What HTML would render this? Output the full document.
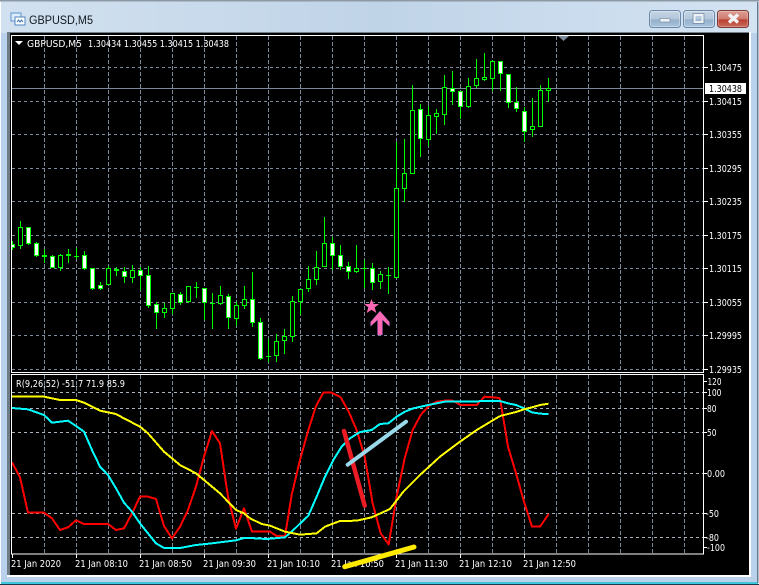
<!DOCTYPE html>
<html><head><meta charset="utf-8"><style>
html,body{margin:0;padding:0;background:#fff}
body{width:759px;height:585px;overflow:hidden;position:relative;font-family:"DejaVu Sans",sans-serif}
svg{position:absolute;left:0;top:0}
text{font-family:"DejaVu Sans",sans-serif;font-size:10px;fill:#fff}
</style></head><body>
<svg width="759" height="585" viewBox="0 0 759 585">
<defs>
<linearGradient id="t2" x1="0" y1="0" x2="1" y2="0"><stop offset="0" stop-color="#d2e1ef"/><stop offset=".5" stop-color="#c0d4e8"/><stop offset="1" stop-color="#d4e3f2"/></linearGradient>
<linearGradient id="btn" x1="0" y1="0" x2="0" y2="1"><stop offset="0" stop-color="#c6d5e4"/><stop offset=".5" stop-color="#b3c7db"/><stop offset=".55" stop-color="#95b0cb"/><stop offset="1" stop-color="#a9c6df"/></linearGradient>
<linearGradient id="cls" x1="0" y1="0" x2="0" y2="1"><stop offset="0" stop-color="#dda297"/><stop offset=".5" stop-color="#cf7a6e"/><stop offset=".55" stop-color="#b83f30"/><stop offset="1" stop-color="#cb6f60"/></linearGradient>
</defs>
<!-- window frame -->
<rect width="759" height="585" fill="#fff"/>
<rect x="1" y="1" width="757" height="583" fill="#b9d1ea"/>
<rect x="1" y="1" width="757" height="32" fill="url(#t2)"/>
<rect x="0" y="0" width="759" height="1.5" fill="#8d9aa6"/>
<rect x="0" y="584" width="759" height="1" fill="#1d3a4a"/>
<rect x="1" y="582" width="757" height="2" fill="#3fc6dc"/>
<rect x="757" y="2" width="1.5" height="581" fill="#5f7c93"/>
<!-- title -->
<g>
<rect x="11" y="13" width="10" height="8" fill="#dcecfb" stroke="#5b93cc"/>
<rect x="15" y="17" width="10" height="8" fill="#fff" stroke="#4f86bf"/>
<path d="M17 22l1.500-2 1.500 2 1.500-2 1.500 2" stroke="#3a6fa8" fill="none"/>
</g>
<text x="29" y="24" textLength="64" lengthAdjust="spacingAndGlyphs" style="font-family:'Liberation Sans',sans-serif;font-size:11.5px;fill:#101820">GBPUSD,M5</text>
<!-- buttons -->
<rect x="649.500" y="10.500" width="31" height="17" rx="3" fill="url(#btn)" stroke="#6a89a8"/>
<rect x="650.500" y="11.500" width="29" height="15" rx="2" fill="none" stroke="#fff" stroke-opacity=".35"/>
<rect x="660" y="18.500" width="10" height="3.500" fill="#eef2f6" stroke="#7a8ea4" stroke-width=".7"/>
<rect x="683.500" y="10.500" width="31" height="17" rx="3" fill="url(#btn)" stroke="#6a89a8"/>
<rect x="684.500" y="11.500" width="29" height="15" rx="2" fill="none" stroke="#fff" stroke-opacity=".35"/>
<rect x="694.500" y="15" width="8" height="7" fill="none" stroke="#eef2f6" stroke-width="2"/>
<rect x="693" y="13.500" width="11" height="10" fill="none" stroke="#6b7f95" stroke-width=".6"/>
<rect x="717.500" y="10.500" width="31" height="17" rx="3" fill="url(#cls)" stroke="#7c3a34"/>
<rect x="718.500" y="11.500" width="29" height="15" rx="2" fill="none" stroke="#fff" stroke-opacity=".25"/>
<path d="M729 14.500l9 8M738 14.500l-9 8" stroke="#f2f2f2" stroke-width="3.400"/>
<!-- client -->
<rect x="7" y="32" width="744" height="545" fill="#fff"/>
<rect x="7" y="32" width="742" height="543" fill="#6f7d89"/>
<rect x="10" y="33" width="739" height="542" fill="#000"/>
<!-- grid -->
<g stroke="#7b8a9a" stroke-width="1" fill="none" shape-rendering="crispEdges">
<path stroke-dasharray="4 2" d="M44.500 36V371M76.500 36V371M108.500 36V371M140.500 36V371M172.500 36V371M204.500 36V371M236.500 36V371M268.500 36V371M300.500 36V371M332.500 36V371M364.500 36V371M396.500 36V371M428.500 36V371M460.500 36V371M492.500 36V371M524.500 36V371M556.500 36V371M588.500 36V371M620.500 36V371M652.500 36V371M684.500 36V371"/>
<path stroke-dasharray="3 3" d="M12 67.500H703M12 101.500H703M12 134.500H703M12 168.500H703M12 201.500H703M12 235.500H703M12 268.500H703M12 302.500H703M12 335.500H703M12 369.500H703"/>
<path stroke-dasharray="4 2" d="M44.500 375V554M76.500 375V554M108.500 375V554M140.500 375V554M172.500 375V554M204.500 375V554M236.500 375V554M268.500 375V554M300.500 375V554M332.500 375V554M364.500 375V554M396.500 375V554M428.500 375V554M460.500 375V554M492.500 375V554M524.500 375V554M556.500 375V554M588.500 375V554M620.500 375V554M652.500 375V554M684.500 375V554"/>
<path stroke-dasharray="3 3" d="M12 392.500H703M12 408.500H703M12 432.500H703M12 473.500H703M12 513.500H703M12 537.500H703" stroke="#a9b4bf"/>
</g>
<path d="M12 88.500H703" stroke="#7b8a9a"/>
<!-- candles -->
<svg x="12" y="36" width="691" height="335" viewBox="12 36 691 335" style="position:absolute">
<path shape-rendering="crispEdges" fill="none" stroke="#0f0" d="M12.500 241V250M20.500 221V249M28.500 227V245M36.500 242V257M44.500 249V263M52.500 255V268M60.500 254V271M68.500 249V263M76.500 248V259M84.500 251V270M92.500 268V290M100.500 282V290M108.500 266V285M116.500 267V276M124.500 267V283M132.500 265V283M140.500 267V290M148.500 266V308M156.500 302V329M164.500 303V318M172.500 293V314M180.500 292V305M188.500 286V303M196.500 282V298M204.500 288V320M212.500 293V329M220.500 286V305M228.500 294V329M236.500 302V326M244.500 286V309M252.500 272V327M260.500 318V360M268.500 339V362M276.500 334V362M284.500 329V354M292.500 296V342M300.500 289V315M308.500 266V292M316.500 251V285M324.500 217V267M332.500 237V270M340.500 245V270M348.500 262V279M356.500 245V273M364.500 260V288M372.500 263V290M380.500 271V289M388.500 267V294M396.500 142V278M404.500 139V202M412.500 85V174M420.500 104V157M428.500 106V146M436.500 109V134M444.500 75V125M452.500 71V105M460.500 91V119M468.500 78V108M476.500 59V88M484.500 53V81M492.500 60V91M500.500 61V91M508.500 74V108M516.500 87V112M524.500 107V142M532.500 98V137M540.500 85V127M548.500 78V102"/>
<path shape-rendering="crispEdges" fill="none" stroke="#0f0" d="M74 256.500h5M194 287.500h5M210 303.500h5M266 356.500h5M362 268.500h5M386 275.500h5"/>
<path shape-rendering="crispEdges" fill="none" stroke="#0f0" stroke-width="2" d="M42 256h5M66 255h5M114 270h5"/>
<path shape-rendering="crispEdges" fill="#fff" stroke="#0f0" d="M10.500 244.500h4v3h-4zM26.500 227.500h4v16h-4zM34.500 243.500h4v12h-4zM50.500 256.500h4v11h-4zM82.500 255.500h4v13h-4zM90.500 268.500h4v20h-4zM98.500 285.500h4v3h-4zM122.500 271.500h4v5h-4zM138.500 270.500h4v5h-4zM146.500 275.500h4v30h-4zM154.500 304.500h4v8h-4zM178.500 294.500h4v8h-4zM202.500 288.500h4v14h-4zM226.500 296.500h4v21h-4zM250.500 299.500h4v23h-4zM258.500 322.500h4v36h-4zM330.500 243.500h4v12h-4zM338.500 255.500h4v11h-4zM346.500 266.500h4v5h-4zM370.500 268.500h4v14h-4zM418.500 109.500h4v29h-4zM450.500 88.500h4v3h-4zM458.500 91.500h4v15h-4zM498.500 61.500h4v12h-4zM506.500 74.500h4v28h-4zM514.500 102.500h4v6h-4zM522.500 111.500h4v20h-4z"/>
<path shape-rendering="crispEdges" fill="#000" stroke="#0f0" d="M18.500 227.500h4v18h-4zM58.500 255.500h4v12h-4zM106.500 268.500h4v16h-4zM130.500 270.500h4v7h-4zM162.500 308.500h4v4h-4zM170.500 293.500h4v15h-4zM186.500 286.500h4v15h-4zM218.500 295.500h4v8h-4zM234.500 305.500h4v13h-4zM242.500 299.500h4v6h-4zM274.500 341.500h4v14h-4zM282.500 336.500h4v4h-4zM290.500 301.500h4v35h-4zM298.500 289.500h4v12h-4zM306.500 279.500h4v9h-4zM314.500 267.500h4v12h-4zM322.500 243.500h4v23h-4zM354.500 268.500h4v3h-4zM378.500 274.500h4v7h-4zM394.500 188.500h4v89h-4zM402.500 173.500h4v15h-4zM410.500 110.500h4v63h-4zM426.500 115.500h4v24h-4zM434.500 113.500h4v3h-4zM442.500 87.500h4v27h-4zM466.500 86.500h4v20h-4zM474.500 78.500h4v7h-4zM482.500 77.500h4v2h-4zM490.500 61.500h4v17h-4zM530.500 126.500h4v3h-4zM538.500 90.500h4v36h-4zM546.500 88.500h4v2h-4z"/>
</svg>
<!-- borders -->
<g fill="none" stroke="#fff" shape-rendering="crispEdges">
<rect x="11.500" y="35.500" width="692" height="337"/>
<rect x="11.500" y="374.500" width="692" height="179.500"/>
<path d="M12.500 554V558M76.500 554V558M140.500 554V558M204.500 554V558M268.500 554V558M332.500 554V558M396.500 554V558M460.500 554V558M524.500 554V558"/>
<path d="M704 67.500h4M704 101.500h4M704 134.500h4M704 168.500h4M704 201.500h4M704 235.500h4M704 268.500h4M704 302.500h4M704 335.500h4M704 369.500h4"/>
<path d="M704 381.500h3M704 392.500h3M704 408.500h3M704 432.500h3M704 473.500h3M704 513.500h3M704 537.500h3M704 547.500h3"/>
</g>
<path d="M558 36h11l-5.500 5z" fill="#7b8a9a"/>
<path d="M15 41h8l-4 4z" fill="#fff"/>
<!-- indicator lines -->
<svg x="12" y="375" width="691" height="179" viewBox="12 375 691 179" style="position:absolute">
<g fill="none" stroke-width="6" shape-rendering="crispEdges" stroke-linejoin="round">
<g transform="translate(0,370) scale(.33333)"><polyline stroke="#f00" points="36,277 60,322 84,428 132,428 156,445 180,480 204,472 228,451 252,462 324,462 348,480 372,475 396,430 420,380 444,380 468,387 492,468 516,505 540,470 564,420 588,350 612,260 636,183 660,220 684,380 708,476 732,415 756,485"/></g>
<g transform="translate(250,370) scale(.33333)"><polyline stroke="#f00" points="5,485 60,485 80,498 105,498 125,375 150,270 175,180 198,108 220,68 245,68 272,82 296,125 320,180 344,260 368,400 392,490 416,523 440,380 464,265 488,180 512,135 536,108 560,95 584,92 608,92 632,105 680,105 704,80 750,84"/></g>
<g transform="translate(500,370) scale(.33333)"><polyline stroke="#f00" points="0,85 24,230 48,310 72,395 96,470 120,470 146,432"/></g>
<g transform="translate(0,370) scale(.33333)"><polyline stroke="#0ff" points="36,114 84,118 132,135 156,158 204,152 228,168 252,185 276,240 300,290 324,315 348,355 372,398 396,425 420,460 444,490 468,520 492,534 540,534 588,525 636,520 708,511 732,504 750,504"/></g>
<g transform="translate(250,370) scale(.33333)"><polyline stroke="#0ff" points="0,504 50,507 105,502 130,480 175,437 200,380 225,320 250,270 275,230 300,205 330,186 365,180 390,162 415,160 440,140 465,125 490,115 535,105 585,95 750,93"/></g>
<g transform="translate(500,370) scale(.33333)"><polyline stroke="#0ff" points="0,93 24,100 48,105 72,115 96,127 120,131 146,132"/></g>
<g transform="translate(0,370) scale(.33333)"><polyline stroke="#ff0" points="36,80 132,80 180,90 228,90 252,98 300,122 348,132 372,145 420,170 444,190 492,245 540,285 588,310 636,350 660,370 708,420 732,430 750,445"/></g>
<g transform="translate(250,370) scale(.33333)"><polyline stroke="#ff0" points="0,445 35,462 60,467 105,485 150,494 200,490 225,470 270,453 320,452 365,442 420,417 460,365 510,315 570,260 630,215 680,180 730,150 750,138"/></g>
<g transform="translate(500,370) scale(.33333)"><polyline stroke="#ff0" points="0,138 24,132 48,126 72,118 96,112 120,105 146,101"/></g>
</g>
</svg>
<!-- labels -->
<text x="27" y="47" textLength="55" lengthAdjust="spacingAndGlyphs">GBPUSD,M5</text>
<text x="88" y="47" textLength="141" lengthAdjust="spacingAndGlyphs">1.30434 1.30455 1.30415 1.30438</text>
<text x="16" y="387" textLength="109" lengthAdjust="spacingAndGlyphs">R(9,26,52) -51.7 71.9 85.9</text>
<g lengthAdjust="spacingAndGlyphs">
<text x="709" y="71" textLength="33" lengthAdjust="spacingAndGlyphs">1.30475</text>
<rect x="705" y="83" width="41" height="11" fill="#fff"/>
<text x="709" y="92" textLength="33" lengthAdjust="spacingAndGlyphs" style="fill:#000">1.30438</text>
<text x="709" y="105" textLength="33" lengthAdjust="spacingAndGlyphs">1.30415</text>
<text x="709" y="138" textLength="33" lengthAdjust="spacingAndGlyphs">1.30355</text>
<text x="709" y="172" textLength="33" lengthAdjust="spacingAndGlyphs">1.30295</text>
<text x="709" y="205" textLength="33" lengthAdjust="spacingAndGlyphs">1.30235</text>
<text x="709" y="239" textLength="33" lengthAdjust="spacingAndGlyphs">1.30175</text>
<text x="709" y="272" textLength="33" lengthAdjust="spacingAndGlyphs">1.30115</text>
<text x="709" y="306" textLength="33" lengthAdjust="spacingAndGlyphs">1.30055</text>
<text x="709" y="339" textLength="33" lengthAdjust="spacingAndGlyphs">1.29995</text>
<text x="709" y="373" textLength="33" lengthAdjust="spacingAndGlyphs">1.29935</text>
<text x="707.500" y="385" textLength="14" lengthAdjust="spacingAndGlyphs">120</text>
<text x="707" y="396" textLength="14.500" lengthAdjust="spacingAndGlyphs">100</text>
<text x="707" y="412" textLength="9.500" lengthAdjust="spacingAndGlyphs">80</text>
<text x="707" y="436" textLength="9.500" lengthAdjust="spacingAndGlyphs">50</text>
<text x="707" y="477" textLength="18" lengthAdjust="spacingAndGlyphs">0.00</text>
<text x="706" y="517" textLength="13" lengthAdjust="spacingAndGlyphs">-50</text>
<text x="706" y="541" textLength="13" lengthAdjust="spacingAndGlyphs">-80</text>
<text x="707" y="551" textLength="18" lengthAdjust="spacingAndGlyphs">-100</text>
<text x="11" y="567" textLength="50" lengthAdjust="spacingAndGlyphs">21 Jan 2020</text>
<text x="75" y="567" textLength="53" lengthAdjust="spacingAndGlyphs">21 Jan 08:10</text>
<text x="139" y="567" textLength="53" lengthAdjust="spacingAndGlyphs">21 Jan 08:50</text>
<text x="203" y="567" textLength="53" lengthAdjust="spacingAndGlyphs">21 Jan 09:30</text>
<text x="267" y="567" textLength="53" lengthAdjust="spacingAndGlyphs">21 Jan 10:10</text>
<text x="331" y="567" textLength="53" lengthAdjust="spacingAndGlyphs">21 Jan 10:50</text>
<text x="395" y="567" textLength="53" lengthAdjust="spacingAndGlyphs">21 Jan 11:30</text>
<text x="459" y="567" textLength="53" lengthAdjust="spacingAndGlyphs">21 Jan 12:10</text>
<text x="523" y="567" textLength="53" lengthAdjust="spacingAndGlyphs">21 Jan 12:50</text>
</g>
<!-- drawn marks -->
<path d="M344 431L364.700 505.700" stroke="#ed1c24" stroke-width="4.500" stroke-linecap="round"/>
<path d="M347.700 464.700L406 421.700" stroke="#99d9ea" stroke-width="4" stroke-linecap="round"/>
<path d="M344.700 566.700L414 547" stroke="#ffea00" stroke-width="5" stroke-linecap="round"/>
<path d="M371.500 299l2 5h5.500l-4.300 3.400 1.600 5.600-4.800-3.200-4.800 3.200 1.600-5.600-4.300-3.400h5.500z" fill="#ff69b4"/>
<path d="M380 311l9.500 11v4.500l-7-6.500v15h-5v-15l-7 6.500V322z" fill="#ff69b4" stroke="#6a4fa8" stroke-width=".4"/>
</svg>
</body></html>
